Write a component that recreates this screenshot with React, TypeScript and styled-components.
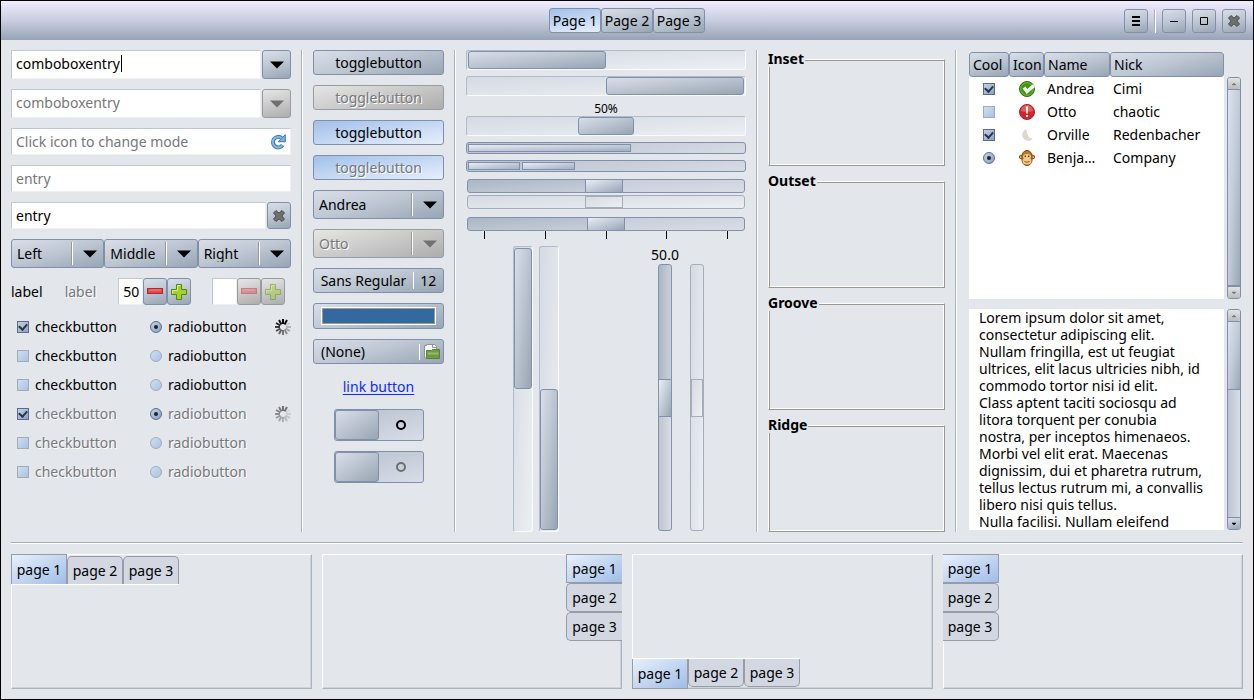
import React from 'react';
import styled, { createGlobalStyle, css } from 'styled-components';

const c = {
  bg: '#e3e6eb',
  ink: '#000',
  dim: '#777879',
  edge: '#8090aa',
  edgeOff: '#999b9f',
};
const raised = 'linear-gradient(165deg, #d9dfe9, #bcc5d1 50%, #98a5b5)';
const raisedOff = 'linear-gradient(165deg, #e6e6e6, #adadad)';
const raisedWide = 'linear-gradient(to bottom right, #d9dfe9, #99a5b4)';
const pressed = 'linear-gradient(170deg, #a2c0ea, #e6effb)';
const tabOn = 'linear-gradient(to bottom right, #e8f0fc, #a0bde6)';
const trough = 'linear-gradient(to bottom right, #d5dae3, #e0e4eb 50%, #eceff2)';

const GlobalStyle = createGlobalStyle`
  * { box-sizing: border-box; }
  body { margin: 0; background: ${c.bg}; }
  body, button, input, select, textarea {
    font: 14px/17px "Noto Sans", "Open Sans", sans-serif;
    color: ${c.ink};
  }
`;

const Window = styled.div`
  display: flex;
  flex-direction: column;
  min-height: 100vh;
  border: 1px solid #000;
  background: ${c.bg};
`;

/* ---------- header bar ---------- */
const HeaderBar = styled.header`
  display: grid;
  grid-template-columns: 1fr auto 1fr;
  align-items: center;
  height: 39px;
  padding: 0 7px;
  background: linear-gradient(#f1edff, #c8cddf 50%, #97a3b6);
`;
const Switcher = styled.nav`
  grid-column: 2;
  display: flex;
`;
const WindowControls = styled.div`
  display: flex;
  justify-content: flex-end;
  gap: 6px;
`;
const Button = styled.button<{ $on?: boolean }>`
  display: flex;
  align-items: center;
  justify-content: center;
  width: 100%;
  height: 25px;
  padding: 0;
  border: 1px solid ${c.edge};
  border-radius: 3px;
  background: ${(p) => (p.$on ? pressed : raised)};
  &:disabled {
    color: ${c.dim};
    text-shadow: 1px 1px #fff;
    ${(p) => !p.$on && css`
      background: ${raisedOff};
      border-color: ${c.edgeOff};
    `}
  }
`;
const SwitcherButton = styled(Button)`
  width: 52px;
`;
const TitleButton = styled(Button)`
  width: 24px;
  height: 24px;
`;
const Rule = styled.div`
  width: 2px;
  border-left: 1px solid #a9b2c3;
  background: #fff;
`;

/* ---------- main grid ---------- */
const Main = styled.main`
  flex: 1;
  display: grid;
  grid-template-columns:
    minmax(0, 280fr) 2px 131px 2px minmax(0, 280fr) 2px
    minmax(0, 177fr) 2px minmax(0, 276fr);
  gap: 10px;
  padding: 10px;
`;
const Column = styled.section<{ $gap?: number }>`
  display: flex;
  flex-direction: column;
  gap: ${(p) => p.$gap ?? 10}px;
  min-width: 0;
`;

/* ---------- entries ---------- */
const Row = styled.div<{ $gap?: number }>`
  display: flex;
  gap: ${(p) => p.$gap ?? 0}px;
`;
const Entry = styled.input`
  flex: 1;
  width: 0;
  min-width: 0;
  height: 27px;
  padding: 0 0 0 4px;
  border: 1px solid;
  border-color: #c0c8d3 #eef0f3 #eef0f3 #c0c8d3;
  background: #fff;
  outline: none;
  &:disabled { color: ${c.dim}; }
  &::placeholder { color: ${c.dim}; opacity: 1; }
`;
const TallEntry = styled(Entry)`
  height: 29px;
  padding-bottom: 2px;
`;
const EntryBox = styled.div`
  display: flex;
  align-items: center;
  padding-right: 4px;
  height: 27px;
  border: 1px solid;
  border-color: #c0c8d3 #eef0f3 #eef0f3 #c0c8d3;
  background: #fff;
  input { border: 0; height: 25px; }
`;
const IconButton = styled.button`
  display: flex;
  padding: 0;
  border: 0;
  background: none;
`;
const Caret = styled.span`
  position: absolute;
  top: 5px;
  left: 110px;
  width: 1px;
  height: 17px;
  background: #000;
`;
const CaretHost = styled.div`
  position: relative;
  display: flex;
  flex: 1;
`;
const ArrowButton = styled(Button)`
  width: 29px;
  height: 29px;
`;
const ClearButton = styled(Button)`
  width: 24px;
  height: 27px;
`;

/* ---------- combo boxes ---------- */
const ComboGroup = styled.div`
  display: grid;
  grid-template-columns: repeat(3, 1fr);
`;
const ComboShell = styled.div`
  display: grid;
  grid-template-columns: minmax(0, 1fr) 2px 31px;
  align-items: center;
`;
const ComboSelect = styled.select`
  grid-area: 1 / 1 / 2 / 4;
  appearance: none;
  height: 29px;
  padding: 0 32px 0 5px;
  border: 1px solid ${c.edge};
  border-radius: 3px;
  background: ${raised};
  &:disabled {
    opacity: 1;
    color: ${c.dim};
    text-shadow: 1px 1px #fff;
    background: ${raisedOff};
    border-color: ${c.edgeOff};
  }
`;
const ComboRule = styled.span`
  grid-area: 1 / 2;
  height: 23px;
  border-left: 1px solid #999a98;
  border-right: 1px solid #fff;
  pointer-events: none;
`;
const ComboArrow = styled.span`
  grid-area: 1 / 3;
  display: flex;
  padding-left: 10px;
  pointer-events: none;
`;

/* ---------- spin buttons ---------- */
const SpinRow = styled.div`
  display: grid;
  grid-template-columns: 33px 33px 73px 73px;
  justify-content: space-between;
  align-items: center;
  padding-right: 6px;
`;
const Label = styled.span<{ $off?: boolean }>`
  ${(p) => p.$off && css`
    color: ${c.dim};
    text-shadow: 1px 1px #fff;
  `}
`;
const StepButton = styled(Button)`
  width: 24px;
  height: 27px;
  &:disabled svg { opacity: 0.45; }
`;

/* ---------- checks and radios ---------- */
const ToggleList = styled.div`
  display: flex;
  flex-direction: column;
  gap: 6px;
`;
const ToggleRow = styled.div`
  display: grid;
  grid-template-columns: 133px 1fr 16px;
  align-items: center;
  height: 23px;
`;
const ToggleLabel = styled.label<{ $off?: boolean }>`
  display: flex;
  align-items: center;
  gap: 6px;
  padding-left: 6px;
  ${(p) => p.$off && css`
    color: ${c.dim};
    text-shadow: 1px 1px #fff;
  `}
`;
const Check = styled.input`
  appearance: none;
  display: grid;
  place-items: center;
  flex: none;
  width: 12px;
  height: 12px;
  margin: 0;
  border: 1px solid #a3abb8;
  background: linear-gradient(to bottom right, #cfdff3, #a9c1e2);
  &:checked {
    border-color: #5c6c86;
    background: linear-gradient(to bottom right, #c3d2e6, #86a1c8);
  }
  &[type='checkbox']:checked::after {
    content: '';
    width: 4px;
    height: 6px;
    margin-bottom: 2px;
    border: solid #2c3440;
    border-width: 0 2px 2px 0;
    transform: rotate(42deg);
  }
  &[type='radio'] { border-radius: 50%; }
  &[type='radio']:checked::after {
    content: '';
    width: 4px;
    height: 4px;
    border-radius: 50%;
    background: #1c2430;
  }
`;

/* ---------- second column ---------- */
const FontSize = styled.span`
  display: flex;
  align-items: center;
  height: 17px;
  margin-left: 7px;
  padding-left: 6px;
  border-left: 1px solid #fff;
`;
const ColorButton = styled(Button)`
  height: 26px;
  padding: 0 7px;
`;
const Swatch = styled.span`
  flex: 1;
  height: 18px;
  border: 1px solid #fff;
  outline: 1px solid #9a9b98;
  outline-offset: -2px;
  background: #33699f;
`;
const FileButton = styled(Button)`
  justify-content: space-between;
  padding: 0 3px 0 7px;
`;
const FileIconBox = styled.span`
  display: flex;
  padding-left: 4px;
  border-left: 1px solid #fff;
`;
const LinkButton = styled.a`
  align-self: center;
  height: 25px;
  line-height: 25px;
  color: #0a2cff;
  text-underline-offset: 2px;
`;
const Switch = styled.button`
  align-self: center;
  display: grid;
  grid-template-columns: 1fr 1fr;
  align-items: center;
  justify-items: center;
  width: 90px;
  height: 32px;
  padding: 0;
  border: 1px solid ${c.edge};
  border-radius: 3px;
  background: linear-gradient(165deg, #b6c0cd, #d8dde7);
`;
const SwitchKnob = styled.span`
  justify-self: stretch;
  height: 30px;
  border: 1px solid ${c.edge};
  border-radius: 3px;
  background: ${raisedWide};
`;
const SwitchOff = styled.span<{ $off?: boolean }>`
  width: 10px;
  height: 10px;
  border: 2px solid ${(p) => (p.$off ? '#6e6f70' : '#000')};
  border-radius: 50%;
`;

/* ---------- progress, levels, scales ---------- */
const ProgressTrough = styled.div<{ $vertical?: boolean; $align?: string }>`
  display: flex;
  flex-direction: ${(p) => (p.$vertical ? 'column' : 'row')};
  justify-content: ${(p) => p.$align ?? 'flex-start'};
  width: ${(p) => (p.$vertical ? '20px' : 'auto')};
  height: ${(p) => (p.$vertical ? 'auto' : '20px')};
  padding: ${(p) => (p.$vertical ? '1px 0' : '0 1px')};
  border: 1px solid;
  border-color: #b1bccb #fafbfc #fafbfc #b1bccb;
  border-radius: 3px;
  background: ${trough};
`;
const ProgressBar = styled.div<{ $size: number }>`
  flex: 0 0 ${(p) => p.$size}%;
  border: 1px solid ${c.edge};
  border-radius: 3px;
  background: ${raisedWide};
`;
const ProgressLabel = styled.div`
  height: 14px;
  line-height: 14px;
  margin-bottom: -6px;
  font-size: 12px;
  text-align: center;
`;
const LevelTrough = styled.div`
  display: flex;
  gap: 2px;
  height: 12px;
  padding: 1px;
  border: 1px solid ${c.edge};
  border-radius: 3px;
  background: linear-gradient(170deg, #b9c2ce, #d6dbe5);
`;
const LevelBlock = styled.div<{ $size: number }>`
  flex: 0 0 ${(p) => p.$size}%;
  border: 1px solid ${c.edge};
  background: linear-gradient(to bottom right, #e8ecf5, #a3afc0);
`;
const thumb = css`
  appearance: none;
  box-sizing: border-box;
  border: 1px solid ${c.edge};
  border-radius: 0;
  background: linear-gradient(to bottom right, #eaedf5, #97a5b8);
`;
const thumbOff = css`
  border-color: #a5afba;
  background: linear-gradient(to bottom right, #d6dbe4, #eceff1);
`;
const ScaleStack = styled.div`
  display: flex;
  flex-direction: column;
  gap: 2px;
  padding: 1px;
`;
const HScale = styled.input`
  appearance: none;
  display: block;
  width: 100%;
  height: 14px;
  margin: 0;
  border: 1px solid #8292a8;
  border-radius: 3px;
  background:
    linear-gradient(175deg, #abb6c4, #c9d0db) left / 50% 100% no-repeat,
    linear-gradient(175deg, #bdc5d2, #d8dde7);
  &::-webkit-slider-thumb { ${thumb} width: 38px; height: 12px; border-width: 0 1px; }
  &:disabled { border-color: #a3adb9; background: ${trough}; }
  &:disabled::-webkit-slider-thumb { ${thumbOff} border-width: 1px; }
`;
const VScale = styled.input`
  appearance: none;
  display: block;
  flex: 1;
  writing-mode: vertical-lr;
  width: 14px;
  height: 0;
  min-height: 0;
  margin: 1px;
  border: 1px solid #8292a8;
  border-radius: 3px;
  background:
    linear-gradient(to right, #abb6c4, #c9d0db) top / 100% 50% no-repeat,
    linear-gradient(to right, #bdc5d2, #d8dde7);
  &::-webkit-slider-thumb { ${thumb} width: 12px; height: 38px; border-width: 1px 0; }
  &:disabled { border-color: #a3adb9; background: ${trough}; }
  &:disabled::-webkit-slider-thumb { ${thumbOff} border-width: 1px; }
`;
const Ticks = styled.div`
  display: flex;
  justify-content: space-between;
  margin-top: -2px;
  padding: 0 17px;
`;
const Tick = styled.i`
  width: 1px;
  height: 8px;
  background: #000;
`;
const VerticalArea = styled.div`
  flex: 1;
  display: grid;
  grid-template-columns: 1fr 1fr;
  justify-items: center;
`;
const ScalePair = styled.div`
  display: flex;
  gap: 10px;
  padding-left: 4px;
`;
const ScaleBox = styled.div`
  display: flex;
  flex-direction: column;
  align-items: center;
`;
const ScaleValue = styled.output`
  height: 17px;
`;

/* ---------- frames ---------- */
const FrameBox = styled.div`
  flex: 1;
  position: relative;
  margin-top: 9px;
  border: 1px solid;
  border-color: #fff #9a978e #9a978e #fff;
  box-shadow: inset 1px 1px #9a978e, inset -1px -1px #fff;
`;
const FrameTitle = styled.h2`
  position: absolute;
  top: -10px;
  left: -1px;
  margin: 0;
  padding-right: 1px;
  background: ${c.bg};
  font-size: 14px;
  line-height: 17px;
  font-weight: 700;
`;
const FrameSlot = styled.div`
  flex: 1;
  display: flex;
`;

/* ---------- list and text views ---------- */
const ViewColumn = styled(Column)`
  padding: 2px;
`;
const ScrollArea = styled.div`
  display: grid;
  grid-template-columns: minmax(0, 1fr) 14px;
  gap: 3px;
`;
const TreeArea = styled(ScrollArea)`
  flex: 1;
`;
const TreePane = styled.div`
  background: #fff;
`;
const Tree = styled.table`
  width: 100%;
  table-layout: fixed;
  border-collapse: separate;
  border-spacing: 0;
`;
const TreeHead = styled.th`
  height: 25px;
  padding: 0 3px;
  border: 1px solid ${c.edge};
  border-radius: 3px;
  background: ${raised};
  font-weight: 400;
  text-align: left;
`;
const TreeCell = styled.td`
  height: 23px;
  padding: 0 3px;
  overflow: hidden;
  text-overflow: ellipsis;
  white-space: nowrap;
  svg { display: block; margin: 0 auto; }
  input { margin: 0 auto; }
`;
const ScrollbarBox = styled.div`
  display: flex;
  flex-direction: column;
  border: 1px solid ${c.edge};
  border-radius: 3px;
  background: linear-gradient(to right, #bcc5d2, #d8dde7);
`;
const TreeScrollbar = styled(ScrollbarBox)`
  margin-top: 25px;
`;
const ScrollButton = styled.button<{ $off?: boolean }>`
  display: flex;
  align-items: center;
  justify-content: center;
  flex: none;
  height: 11px;
  padding: 0;
  border: 0;
  border-radius: 2px;
  color: ${(p) => (p.$off ? '#777' : '#000')};
  background: ${(p) => (p.$off ? 'linear-gradient(#e3e3e3, #bcbcbc)' : raised)};
`;
const ScrollThumb = styled.div<{ $size: number }>`
  height: ${(p) => p.$size}%;
  border: solid ${c.edge};
  border-width: 1px 0;
  background: linear-gradient(to bottom right, #dde3ee, #c2cad8 50%, #98a6ba);
`;
const ScrollTrack = styled.div`
  flex: 1;
  border-bottom: 1px solid ${c.edge};
`;
const TextView = styled.textarea`
  width: 100%;
  height: 221px;
  padding: 0 10px;
  border: 0;
  outline: none;
  resize: none;
  overflow: hidden;
  white-space: pre;
  background: #fff;
`;

/* ---------- notebooks ---------- */
const HRule = styled.div`
  height: 2px;
  margin: 0 10px;
  border-top: 1px solid #a2adc0;
  background: #fff;
`;
const Notebooks = styled.section`
  display: grid;
  grid-template-columns: repeat(4, minmax(0, 1fr));
  gap: 10px;
  padding: 10px;
`;
type Side = 'top' | 'right' | 'bottom' | 'left';
const Notebook = styled.div<{ $side: Side }>`
  display: flex;
  height: 135px;
  border: 1px solid;
  border-color: #fff #a9b3c0 #a9b3c0 #fff;
  box-shadow: inset -1px -1px #cdd3db;
  align-items: ${(p) => (p.$side === 'bottom' ? 'flex-end' : 'flex-start')};
  justify-content: ${(p) => (p.$side === 'right' ? 'flex-end' : 'flex-start')};
`;
const TabStrip = styled.div<{ $side: Side }>`
  display: flex;
  margin: -1px;
  flex-direction: ${(p) => (p.$side === 'left' || p.$side === 'right' ? 'column' : 'row')};
  align-items: ${(p) => (p.$side === 'top' ? 'flex-end' : 'flex-start')};
  ${(p) => p.$side === 'top' && 'border-bottom: 1px solid #fff;'}
  ${(p) => p.$side === 'bottom' && 'border-top: 1px solid #fff;'}
`;
const radii: Record<Side, string> = {
  top: '5px 5px 0 0',
  right: '5px 0 0 5px',
  bottom: '0 0 5px 5px',
  left: '0 5px 5px 0',
};
const openEdge: Record<Side, string> = {
  top: 'bottom',
  right: 'right',
  bottom: 'top',
  left: 'left',
};
const Tab = styled.button<{ $side: Side; $on: boolean }>`
  width: 56px;
  height: ${(p) =>
    p.$side === 'left' || p.$side === 'right' ? 29 : p.$on ? 30 : 28}px;
  padding: 0;
  border: 1px solid #989ca8;
  border-${(p) => openEdge[p.$side]}: 0;
  border-radius: ${(p) => (p.$on ? '0' : radii[p.$side])};
  background: ${(p) => (p.$on ? tabOn : '#d2d7e2')};
`;

/* ---------- icons ---------- */
const ArrowIcon = ({ off }: { off?: boolean }) => (
  <svg width="14" height="8" viewBox="0 0 14 8" aria-hidden="true">
    <path d="M0 0.5h14L7 7.5z" fill={off ? '#707070' : '#000'} />
  </svg>
);
const SmallArrow = ({ up }: { up?: boolean }) => (
  <svg width="6" height="4" viewBox="0 0 6 4" aria-hidden="true">
    <path d={up ? 'M1 3L3 1L5 3z' : 'M1 1L3 3L5 1z'} fill="currentColor" stroke="currentColor" strokeWidth="0.5" />
  </svg>
);
const MenuIcon = () => (
  <svg width="8" height="10" viewBox="0 0 8 10" aria-hidden="true">
    <path d="M0 0h8v2H0zM0 4h8v2H0zM0 8h8v2H0z" />
  </svg>
);
const MinimizeIcon = () => (
  <svg width="8" height="8" viewBox="0 0 8 8" aria-hidden="true">
    <path d="M0 4h8v1H0z" />
  </svg>
);
const MaximizeIcon = () => (
  <svg width="8" height="8" viewBox="0 0 8 8" aria-hidden="true">
    <path d="M0.5 0.5h7v7h-7z" fill="none" stroke="#000" />
  </svg>
);
const CrossIcon = () => (
  <svg width="14" height="14" viewBox="0 0 14 14" aria-hidden="true">
    <path
      d="M4 1.5L7 4.2L10 1.5L12.500 4L9.800 7L12.500 10L10 12.500L7 9.800L4 12.500L1.500 10L4.200 7L1.500 4z"
      fill="#70716d" stroke="#464844" strokeLinejoin="round"
    />
  </svg>
);
const RefreshIcon = () => (
  <svg width="16" height="16" viewBox="0 0 16 16" aria-hidden="true">
    <path d="M12.6 11.2A5.3 5.3 0 1 1 11.6 4" fill="none" stroke="#3f78b5" strokeWidth="4" />
    <path d="M15.3 0.7v7H8.2z" fill="#7db0e2" stroke="#3f78b5" strokeLinejoin="round" />
    <path d="M12.3 11.4A5.3 5.3 0 1 1 11.6 4.2" fill="none" stroke="#86b7e6" strokeWidth="2" />
  </svg>
);
const MinusIcon = () => (
  <svg width="16" height="16" viewBox="0 0 16 16" aria-hidden="true">
    <rect x="0.5" y="4.5" width="15" height="5" fill="#e04a4e" stroke="#b3262b" />
    <path d="M2 6h12" stroke="#f08a8a" />
  </svg>
);
const PlusIcon = () => (
  <svg width="16" height="16" viewBox="0 0 16 16" aria-hidden="true">
    <path
      d="M5.5 0.5h5v5h5v5h-5v5h-5v-5h-5v-5h5z"
      fill="#a8cf2c" stroke="#4e8a0c" strokeLinejoin="round"
    />
    <path d="M6.5 6.5v-5h3M1.5 9.5v-3h5" fill="none" stroke="#d8ee85" />
  </svg>
);
const SpinnerIcon = ({ off }: { off?: boolean }) => (
  <svg width="16" height="16" viewBox="0 0 16 16" opacity={off ? 0.5 : 1} aria-hidden="true">
    {Array.from({ length: 12 }, (_, i) => (
      <path
        key={i}
        d="M8 0v5"
        stroke="#000"
        strokeWidth="2"
        opacity={i < 2 ? 1 : 0.12 + ((i - 2) / 9) * 0.8}
        transform={`rotate(${i * 30} 8 8)`}
      />
    ))}
  </svg>
);
const FolderIcon = () => (
  <svg width="16" height="16" viewBox="0 0 16 16" aria-hidden="true">
    <path d="M0.5 1.5h2v-1h8l2 2V14h-12z" fill="#f4f4f2" stroke="#92938f" />
    <path d="M8.5 0.5V3.5h4" fill="none" stroke="#92938f" />
    <path d="M2.5 14.5V6.5h5l1-1h7v9z" fill="#6f9c45" stroke="#58803a" />
    <path d="M3.5 8.5h11v2h-11z" fill="#93bd69" />
  </svg>
);
const OkIcon = () => (
  <svg width="16" height="16" viewBox="0 0 16 16" aria-hidden="true">
    <circle cx="8" cy="8" r="7.5" fill="#43970f" stroke="#2f6d10" />
    <circle cx="8" cy="8" r="6.3" fill="none" stroke="#84bd5c" strokeWidth="0.8" />
    <path d="M5 6.5l3 4L15 4.500" fill="none" stroke="#f4f6f0" strokeWidth="3.500" />
  </svg>
);
const AlertIcon = () => (
  <svg width="16" height="16" viewBox="0 0 16 16" aria-hidden="true">
    <circle cx="8" cy="8" r="7.5" fill="#d0262c" stroke="#a81d3a" />
    <path d="M2 7a6 6 0 0 1 12 0q-6 2-12 0z" fill="#e45c58" />
    <path d="M6.8 2.5h2.4l-0.5 7H7.3zM7 11h2v2H7z" fill="#fff" />
  </svg>
);
const MoonIcon = () => (
  <svg width="16" height="16" viewBox="0 0 16 16" aria-hidden="true">
    <path d="M8 2A6 6 0 1 0 14 11.5A5 5 0 0 1 9 8.5Q7 5 8 2z" fill="#dcd9d0" />
  </svg>
);
const MonkeyIcon = () => (
  <svg width="16" height="16" viewBox="0 0 16 16" aria-hidden="true">
    <circle cx="2.2" cy="7" r="1.8" fill="#e9b96e" stroke="#7d4a0c" />
    <circle cx="13.8" cy="7" r="1.8" fill="#e9b96e" stroke="#7d4a0c" />
    <path d="M3 6a5 5.5 0 0 1 10 0v4a5 5.5 0 0 1-10 0z" fill="#b97a28" stroke="#7d4a0c" />
    <ellipse cx="8" cy="6.500" rx="4" ry="2.500" fill="#f0c988" />
    <ellipse cx="8" cy="11" rx="4.500" ry="3.500" fill="#f0c988" />
    <circle cx="6.3" cy="6.300" r="0.8" fill="#3b2204" />
    <circle cx="9.700" cy="6.300" r="0.8" fill="#3b2204" />
    <path d="M5.5 11.5q2.500 1.500 5 0" fill="none" stroke="#8f5a18" />
  </svg>
);

/* ---------- composed pieces ---------- */
const Combo = ({ value, off }: { value: string; off?: boolean }) => (
  <ComboShell>
    <ComboSelect aria-label={value} disabled={off} defaultValue={value}>
      <option>{value}</option>
    </ComboSelect>
    <ComboRule />
    <ComboArrow>
      <ArrowIcon off={off} />
    </ComboArrow>
  </ComboShell>
);

const Spin = ({ value, off }: { value: string; off?: boolean }) => (
  <Row>
    <Entry aria-label="Amount" defaultValue={value} disabled={off} />
    <StepButton aria-label="Decrease" disabled={off}><MinusIcon /></StepButton>
    <StepButton aria-label="Increase" disabled={off}><PlusIcon /></StepButton>
  </Row>
);

const Scrollbar = ({ box: Box, size, endOff }: {
  box: React.ElementType;
  size: number;
  endOff?: boolean;
}) => (
  <Box>
    <ScrollButton $off aria-label="Scroll up"><SmallArrow up /></ScrollButton>
    <ScrollTrack>
      <ScrollThumb $size={size} />
    </ScrollTrack>
    <ScrollButton $off={endOff} aria-label="Scroll down"><SmallArrow /></ScrollButton>
  </Box>
);

const toggles = [
  { checked: true, off: false },
  { checked: false, off: false },
  { checked: false, off: false },
  { checked: true, off: true },
  { checked: false, off: true },
  { checked: false, off: true },
];

const people = [
  { kind: 'checkbox', cool: true, icon: <OkIcon />, name: 'Andrea', nick: 'Cimi' },
  { kind: 'checkbox', cool: false, icon: <AlertIcon />, name: 'Otto', nick: 'chaotic' },
  { kind: 'checkbox', cool: true, icon: <MoonIcon />, name: 'Orville', nick: 'Redenbacher' },
  { kind: 'radio', cool: true, icon: <MonkeyIcon />, name: 'Benjamin', nick: 'Company' },
];

const lorem = `Lorem ipsum dolor sit amet,
consectetur adipiscing elit.
Nullam fringilla, est ut feugiat
ultrices, elit lacus ultricies nibh, id
commodo tortor nisi id elit.
Class aptent taciti sociosqu ad
litora torquent per conubia
nostra, per inceptos himenaeos.
Morbi vel elit erat. Maecenas
dignissim, dui et pharetra rutrum,
tellus lectus rutrum mi, a convallis
libero nisi quis tellus.
Nulla facilisi. Nullam eleifend`;

const sides: Side[] = ['top', 'right', 'bottom', 'left'];

export default function App() {
  return (
    <Window>
      <GlobalStyle />
      <HeaderBar>
        <Switcher>
          <SwitcherButton $on>Page 1</SwitcherButton>
          <SwitcherButton>Page 2</SwitcherButton>
          <SwitcherButton>Page 3</SwitcherButton>
        </Switcher>
        <WindowControls>
          <TitleButton aria-label="Menu"><MenuIcon /></TitleButton>
          <Rule />
          <TitleButton aria-label="Minimize"><MinimizeIcon /></TitleButton>
          <TitleButton aria-label="Maximize"><MaximizeIcon /></TitleButton>
          <TitleButton aria-label="Close"><CrossIcon /></TitleButton>
        </WindowControls>
      </HeaderBar>

      <Main>
        <Column>
          <Row $gap={1}>
            <CaretHost>
              <TallEntry aria-label="Combo entry" defaultValue="comboboxentry" />
              <Caret />
            </CaretHost>
            <ArrowButton aria-label="Open list"><ArrowIcon /></ArrowButton>
          </Row>
          <Row $gap={1}>
            <TallEntry aria-label="Disabled combo entry" defaultValue="comboboxentry" disabled />
            <ArrowButton aria-label="Open list" disabled><ArrowIcon off /></ArrowButton>
          </Row>
          <EntryBox>
            <Entry aria-label="Mode" placeholder="Click icon to change mode" />
            <IconButton aria-label="Change mode"><RefreshIcon /></IconButton>
          </EntryBox>
          <Row>
            <Entry aria-label="Disabled entry" defaultValue="entry" disabled />
          </Row>
          <Row $gap={1}>
            <Entry aria-label="Entry" defaultValue="entry" />
            <ClearButton aria-label="Clear"><CrossIcon /></ClearButton>
          </Row>
          <ComboGroup>
            <Combo value="Left" />
            <Combo value="Middle" />
            <Combo value="Right" />
          </ComboGroup>
          <SpinRow>
            <Label>label</Label>
            <Label $off>label</Label>
            <Spin value="50" />
            <Spin value="" off />
          </SpinRow>
          <ToggleList>
            {toggles.map((t, i) => (
              <ToggleRow key={i}>
                <ToggleLabel $off={t.off}>
                  <Check type="checkbox" defaultChecked={t.checked} disabled={t.off} />
                  checkbutton
                </ToggleLabel>
                <ToggleLabel $off={t.off}>
                  <Check
                    type="radio"
                    name={t.off ? 'radio-off' : 'radio-on'}
                    defaultChecked={t.checked}
                    disabled={t.off}
                  />
                  radiobutton
                </ToggleLabel>
                {t.checked && <SpinnerIcon off={t.off} />}
              </ToggleRow>
            ))}
          </ToggleList>
        </Column>
        <Rule />

        <Column>
          <Button>togglebutton</Button>
          <Button disabled>togglebutton</Button>
          <Button $on>togglebutton</Button>
          <Button $on disabled>togglebutton</Button>
          <Combo value="Andrea" />
          <Combo value="Otto" off />
          <Button>
            Sans Regular
            <FontSize>12</FontSize>
          </Button>
          <ColorButton aria-label="Pick a color"><Swatch /></ColorButton>
          <FileButton>
            (None)
            <FileIconBox><FolderIcon /></FileIconBox>
          </FileButton>
          <LinkButton href="#">link button</LinkButton>
          <Switch role="switch" aria-checked="false" aria-label="Switch">
            <SwitchKnob />
            <SwitchOff />
          </Switch>
          <Switch role="switch" aria-checked="false" aria-label="Disabled switch" disabled>
            <SwitchKnob />
            <SwitchOff $off />
          </Switch>
        </Column>
        <Rule />

        <Column $gap={6}>
          <ProgressTrough><ProgressBar $size={50} /></ProgressTrough>
          <ProgressTrough $align="flex-end"><ProgressBar $size={50} /></ProgressTrough>
          <ProgressLabel>50%</ProgressLabel>
          <ProgressTrough $align="center"><ProgressBar $size={20} /></ProgressTrough>
          <LevelTrough><LevelBlock $size={59} /></LevelTrough>
          <LevelTrough>
            <LevelBlock $size={19} />
            <LevelBlock $size={19} />
          </LevelTrough>
          <ScaleStack>
            <HScale type="range" aria-label="Scale" defaultValue={49} />
            <HScale type="range" aria-label="Disabled scale" defaultValue={49} disabled />
          </ScaleStack>
          <ScaleStack>
            <HScale type="range" aria-label="Scale with marks" defaultValue={50} />
            <Ticks>
              <Tick /><Tick /><Tick /><Tick /><Tick />
            </Ticks>
          </ScaleStack>
          <VerticalArea>
            <Row $gap={6}>
              <ProgressTrough $vertical><ProgressBar $size={50} /></ProgressTrough>
              <ProgressTrough $vertical $align="flex-end"><ProgressBar $size={50} /></ProgressTrough>
            </Row>
            <ScalePair>
              <ScaleBox>
                <ScaleValue>50.0</ScaleValue>
                <VScale type="range" aria-label="Vertical scale" defaultValue={50} />
              </ScaleBox>
              <ScaleBox>
                <ScaleValue />
                <VScale type="range" aria-label="Disabled vertical scale" defaultValue={50} disabled />
              </ScaleBox>
            </ScalePair>
          </VerticalArea>
        </Column>
        <Rule />

        <Column $gap={6}>
          {['Inset', 'Outset', 'Groove', 'Ridge'].map((t) => (
            <FrameSlot key={t}>
              <FrameBox><FrameTitle>{t}</FrameTitle></FrameBox>
            </FrameSlot>
          ))}
        </Column>
        <Rule />

        <ViewColumn>
          <TreeArea>
            <TreePane>
              <Tree>
                <colgroup>
                  <col style={{ width: 40 }} />
                  <col style={{ width: 35 }} />
                  <col style={{ width: 66 }} />
                  <col />
                </colgroup>
                <thead>
                  <tr>
                    <TreeHead>Cool</TreeHead>
                    <TreeHead>Icon</TreeHead>
                    <TreeHead>Name</TreeHead>
                    <TreeHead>Nick</TreeHead>
                  </tr>
                </thead>
                <tbody>
                  {people.map((p) => (
                    <tr key={p.name}>
                      <TreeCell>
                        <Check type={p.kind} defaultChecked={p.cool} aria-label={`${p.name} is cool`} />
                      </TreeCell>
                      <TreeCell>{p.icon}</TreeCell>
                      <TreeCell>{p.name}</TreeCell>
                      <TreeCell>{p.nick}</TreeCell>
                    </tr>
                  ))}
                </tbody>
              </Tree>
            </TreePane>
            <Scrollbar box={TreeScrollbar} size={100} endOff />
          </TreeArea>
          <ScrollArea>
            <TextView aria-label="Text" defaultValue={lorem} wrap="off" />
            <Scrollbar box={ScrollbarBox} size={35} />
          </ScrollArea>
        </ViewColumn>
      </Main>

      <HRule />

      <Notebooks>
        {sides.map((side) => (
          <Notebook key={side} $side={side}>
            <TabStrip $side={side} role="tablist">
              {[1, 2, 3].map((n) => (
                <Tab key={n} $side={side} $on={n === 1} role="tab" aria-selected={n === 1}>
                  page {n}
                </Tab>
              ))}
            </TabStrip>
          </Notebook>
        ))}
      </Notebooks>
    </Window>
  );
}
